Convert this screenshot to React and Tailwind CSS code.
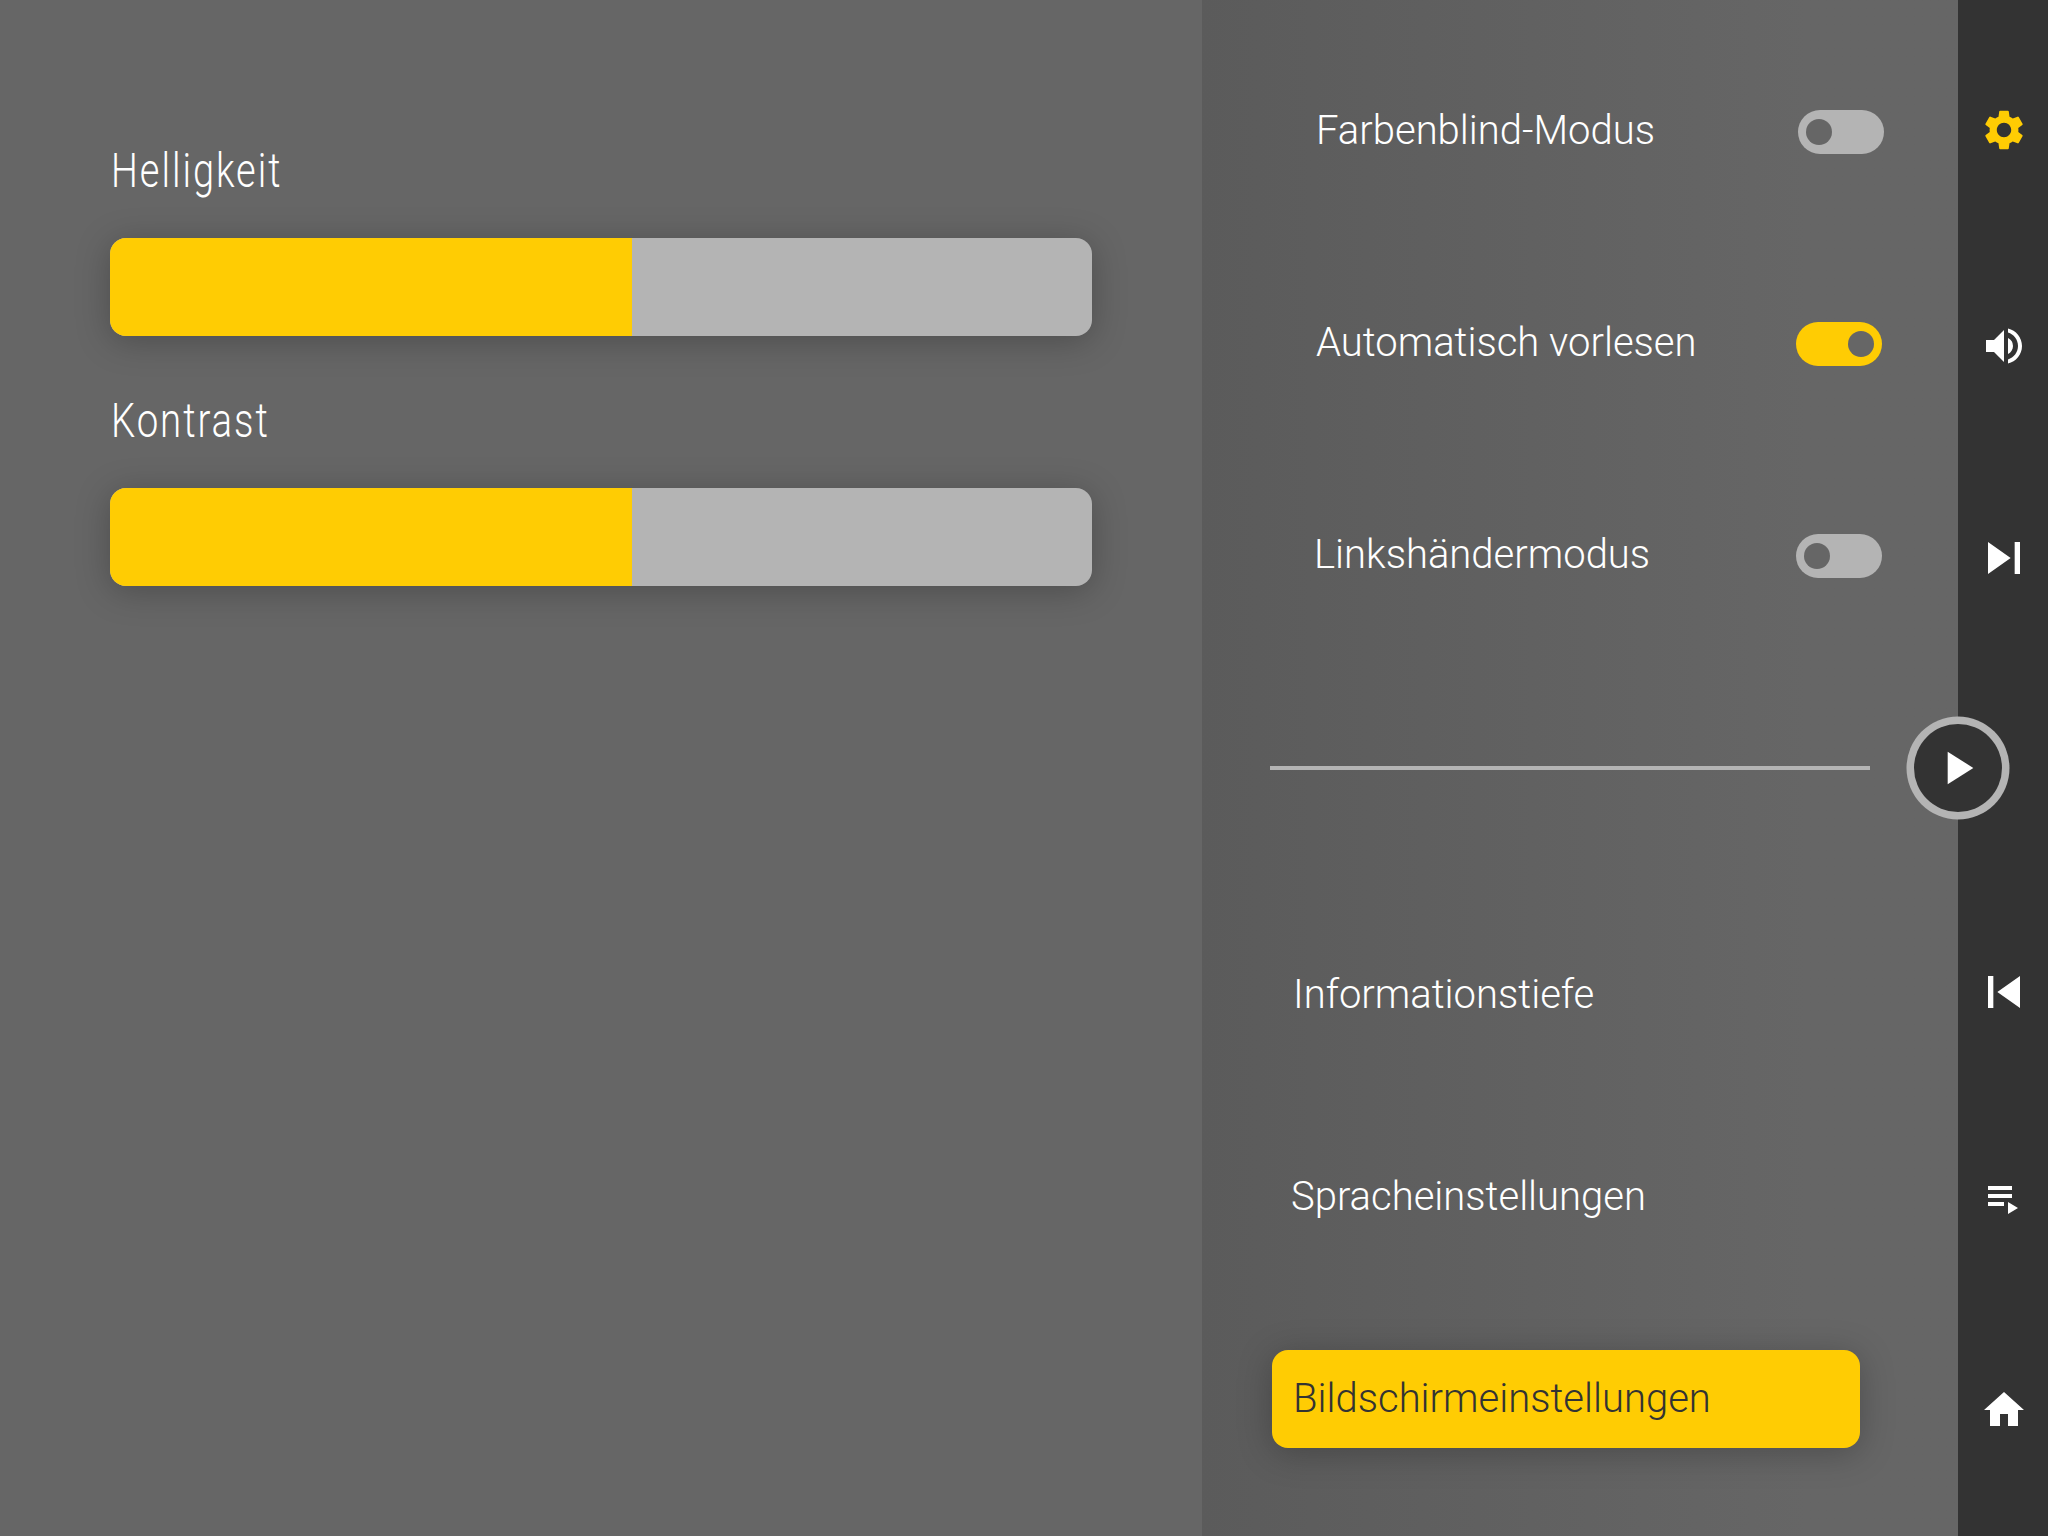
import React from "react";
import { MdSettings, MdVolumeUp, MdSkipNext, MdSkipPrevious, MdPlayArrow, MdHome } from "react-icons/md";

function Slider({ label, labelClass, value }) {
  return (
    <div className="h-[250px]">
      <h2 className={`ml-px h-[98px] w-max origin-left pt-[3px] text-[48px] leading-[56px] font-[350] whitespace-nowrap ${labelClass}`}>
        {label}
      </h2>
      <div className="h-[98px] w-[982px] overflow-hidden rounded-2xl bg-[#b4b4b4] shadow-[0_5px_34px_rgba(0,0,0,0.25)]">
        <div className="h-full bg-[#ffcc03]" style={{ width: value }} />
      </div>
    </div>
  );
}

function Toggle({ on }) {
  return (
    <div className={on ? "flex h-11 w-[86px] items-center justify-end rounded-full bg-[#ffcc03] px-2" : "flex h-11 w-[86px] items-center rounded-full bg-[#b4b4b4] px-2"}>
      <div className="size-[26px] rounded-full bg-[#666666]" />
    </div>
  );
}

function ToggleRow({ label, on, className }) {
  return (
    <div className={`flex h-[212px] items-start justify-between ${className}`}>
      <span className="-mt-[3px] text-[40px] leading-[48px] font-light whitespace-nowrap">{label}</span>
      <Toggle on={on} />
    </div>
  );
}

function PlaylistIcon() {
  return (
    <svg viewBox="0 0 24 24" className="size-12" fill="currentColor">
      <path d="M4 10h12v2H4zM4 6h12v2H4zM4 14h8v2H4zM14 14v6l5-3z" />
    </svg>
  );
}

export default function App() {
  return (
    <div className="flex h-[1536px] w-[2048px] overflow-hidden bg-[#666666] font-['Roboto',sans-serif] text-white">
      <main className="w-[1202px] pt-[140px] pl-[110px]">
        <Slider label="Helligkeit" labelClass="scale-x-[0.79] tracking-[2.5px]" value="522px" />
        <Slider label="Kontrast" labelClass="scale-x-[0.8] tracking-[2.4px]" value="522px" />
      </main>

      <section className="flex w-[756px] flex-col bg-linear-to-r from-[#5b5b5b] to-[#666666] to-80% pt-[110px]">
        <ToggleRow label="Farbenblind-Modus" className="pr-[74px] pl-[114px]" />
        <ToggleRow label="Automatisch vorlesen" on className="pr-[76px] pl-[114px]" />
        <ToggleRow label="Linkshändermodus" className="pr-[76px] pl-[112px]" />
        <div className="mt-5 ml-[68px] h-1 w-[600px] bg-[#b4b4b4]" />
        <nav className="ml-[70px] flex w-[588px] flex-col pt-[176px] text-[40px] font-light">
          <a className="flex h-[98px] items-center pl-[21px]">Informationstiefe</a>
          <a className="mt-[104px] flex h-[98px] items-center pl-[19px]">Spracheinstellungen</a>
          <a className="mt-[104px] flex h-[98px] items-center rounded-2xl bg-[#ffcc03] pl-[21px] text-[#333333] shadow-[0_5px_34px_rgba(0,0,0,0.25)]">
            Bildschirmeinstellungen
          </a>
        </nav>
      </section>

      <aside className="flex w-[90px] flex-col items-center bg-[#333333] pt-[106px] pl-[2px]">
        <MdSettings className="size-12 text-[#ffcc03]" />
        <MdVolumeUp className="mt-[168px] size-12" />
        <MdSkipNext className="mt-[156px] size-16" />
        <button className="mt-[134px] mr-[92px] flex size-[88px] shrink-0 items-center justify-center rounded-full bg-[#333333] shadow-[0_0_0_7.5px_#b4b4b4]">
          <MdPlayArrow className="mr-[2px] size-14" />
        </button>
        <MdSkipPrevious className="mt-[148px] size-16" />
        <div className="mt-[150px]">
          <PlaylistIcon />
        </div>
        <MdHome className="mt-[164px] size-12" />
      </aside>
    </div>
  );
}
